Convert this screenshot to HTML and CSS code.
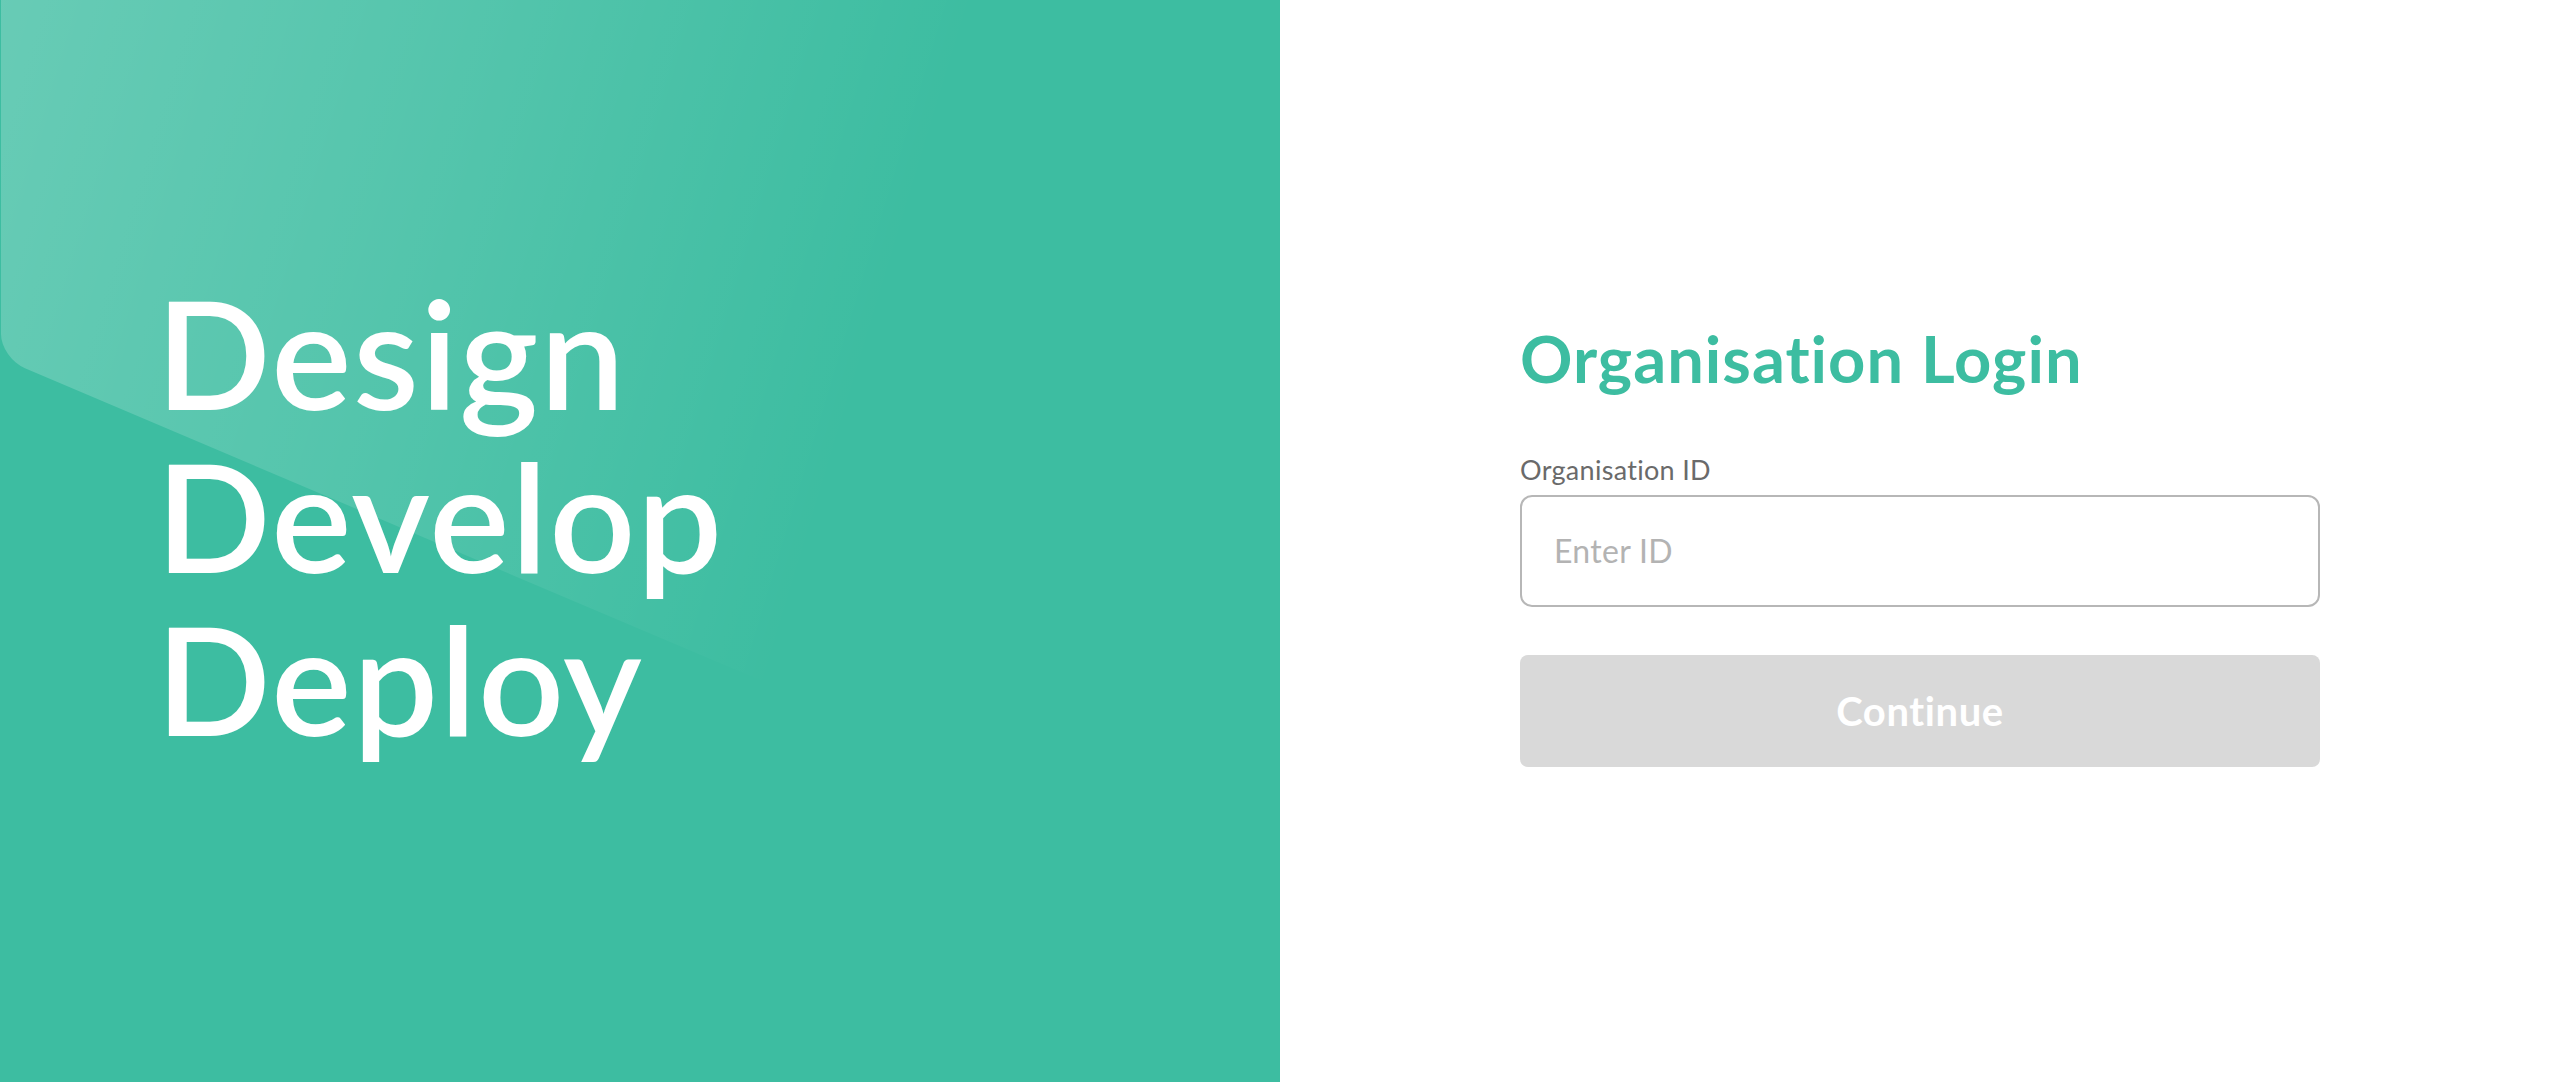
FILE: index.html
```html
<!DOCTYPE html>
<html lang="en">
<head>
<meta charset="utf-8">
<title>Organisation Login</title>
<link rel="stylesheet" href="styles.css">
</head>
<body>
<div class="page">
  <section class="hero">
    <div class="gloss"></div>
    <h1 class="hero-text">Design<br>Develop<br>Deploy</h1>
  </section>
  <section class="panel">
    <form class="login">
      <h2 class="title">Organisation Login</h2>
      <label class="label" for="org">Organisation ID</label>
      <input class="field" id="org" type="text" placeholder="Enter ID">
      <button class="btn" type="button">Continue</button>
    </form>
  </section>
</div>
</body>
</html>
```

FILE: styles.css
```css
html, body {
  margin: 0;
  padding: 0;
  height: 100%;
}
body {
  font-family: Lato, "Noto Sans", sans-serif;
  background: #ffffff;
}
.page {
  display: flex;
  height: 1082px;
  width: 2560px;
}
.hero {
  position: relative;
  overflow: hidden;
  width: 1280px;
  flex: none;
  background: #3dbda1;
  display: flex;
  align-items: center;
}
.gloss {
  position: absolute;
  left: 1px;
  top: -600px;
  width: 1400px;
  height: 958px;
  transform-origin: 0 0;
  transform: skewY(23deg);
  border-bottom-left-radius: 24px;
  background: linear-gradient(105deg, rgba(255,255,255,0.26) 0%, rgba(255,255,255,0.12) 35%, rgba(255,255,255,0) 62%);
}
.hero-text {
  position: relative;
  margin: 0;
  padding: 0 0 54px 156px;
  color: #ffffff;
  font-size: 151px;
  line-height: 163px;
  font-weight: 600;
  letter-spacing: 1.5px;
}
.panel {
  flex: 1;
  display: flex;
  align-items: center;
  justify-content: center;
}
.login {
  width: 800px;
  display: flex;
  flex-direction: column;
  margin-top: 2px;
}
.title {
  margin: 0 0 56px 0;
  color: #3dbda1;
  font-size: 65px;
  line-height: 80px;
  font-weight: 700;
  letter-spacing: 1px;
}
.label {
  color: #6a6a6a;
  font-size: 27px;
  line-height: 32px;
  letter-spacing: 0.3px;
  margin-bottom: 9px;
}
.field {
  box-sizing: border-box;
  height: 112px;
  width: 100%;
  border: 2px solid #b7b7b7;
  border-radius: 12px;
  padding: 0 32px;
  font-family: Lato, "Noto Sans", sans-serif;
  font-size: 32px;
  letter-spacing: 0.3px;
  color: #333;
  outline: none;
}
.field::placeholder {
  color: #b3b3b3;
}
.btn {
  margin-top: 48px;
  height: 112px;
  width: 100%;
  border: none;
  border-radius: 8px;
  background: #d9d9d9;
  color: #ffffff;
  font-family: Lato, "Noto Sans", sans-serif;
  font-size: 40px;
  font-weight: 700;
  letter-spacing: 0.6px;
}
```
